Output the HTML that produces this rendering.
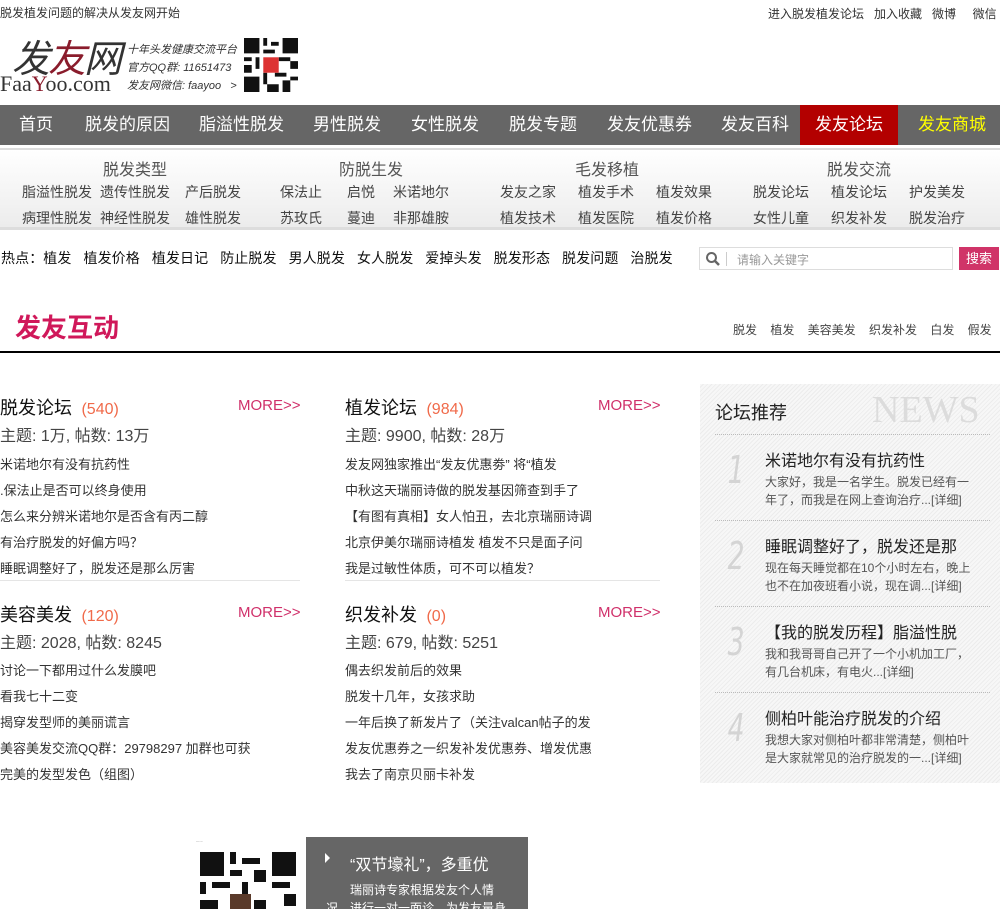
<!DOCTYPE html>
<html><head><meta charset="utf-8"><style>
*{margin:0;padding:0;box-sizing:border-box}
body{width:1000px;height:909px;overflow:hidden;background:#fff;font-family:"Liberation Sans","Noto Sans CJK SC",sans-serif;color:#333;position:relative}
.a{position:absolute;white-space:nowrap}
.nav{position:absolute;top:105px;left:0;width:1000px;height:40px;background:#666}
.nav span{position:absolute;top:0;line-height:40px;font-size:17px;color:#fff}
.sub{position:absolute;top:148px;left:0;width:1000px;height:82px;background:linear-gradient(#fff,#ececec);border-top:2px solid #ddd;border-bottom:3px solid #ddd}
.sub span{position:absolute;font-size:14px;color:#444}
.sub .h{font-size:16px;color:#555}
.f{font-size:13px;color:#333}
.side{position:absolute;left:700px;top:384px;width:300px;height:399px;background:repeating-linear-gradient(135deg,#f7f7f7 0 2px,#ececec 2px 3px)}
.dot{position:absolute;left:15px;width:275px;border-top:1px dotted #bbb}
.num{position:absolute;left:24px;font-size:38px;color:#d4d4d4;font-style:italic;font-family:"DejaVu Sans",sans-serif;font-weight:normal;transform:scaleX(0.7)}
.st{position:absolute;left:65px;font-size:16px;color:#222}
.sd{position:absolute;left:65px;font-size:12px;color:#555;line-height:18px;width:215px;white-space:normal}
.more{position:absolute;font-size:15px;color:#d0306a}
</style></head><body>
<div class="a" style="left:0;top:4px;font-size:12px">脱发植发问题的解决从发友网开始</div>
<div class="a" style="left:768px;top:5px;font-size:12px">进入脱发植发论坛 &nbsp; 加入收藏 &nbsp; 微博 &nbsp;&nbsp;&nbsp; 微信</div>
<div class="a" style="left:12px;top:28px;font-size:38px;font-style:italic;color:#333;letter-spacing:-2px">发<span style="color:#8a1c2c">友</span>网</div>
<div class="a" style="left:0;top:71px;font-size:22px;font-family:'Liberation Serif',serif;color:#333">Faa<span style="color:#8a1c2c">Y</span>oo.com</div>
<div class="a" style="left:127px;top:41px;font-size:11px;font-style:italic;line-height:18px;color:#333">十年头发健康交流平台<br>官方QQ群: 11651473<br>发友网微信: faayoo &nbsp; &gt;</div>
<svg class="a" style="left:243px;top:38px" width="56" height="54" viewBox="0 0 14 14"><rect width="14" height="14" fill="#fff"/><g fill="#111"><path d="M0 0h4v4h-4zM10 0h4v4h-4zM0 10h4v4h-4z"/><path d="M5 0h1v2h-1zM7 1h2v1h-2zM5 3h3v1h-3zM0 5h2v1h-2zM3 5h1v3h-1zM9 5h3v1h-3zM12 6h2v2h-2zM0 7h2v2h-2zM5 9h1v3h-1zM8 9h3v1h-3zM10 11h2v3h-2zM12 10h2v1h-2zM6 12h3v2h-3z"/></g><rect x="5" y="5" width="4" height="4" fill="#d33"/></svg>
<div class="nav">
<span style="left:19px">首页</span><span style="left:85px">脱发的原因</span><span style="left:199px">脂溢性脱发</span><span style="left:313px">男性脱发</span><span style="left:411px">女性脱发</span><span style="left:509px">脱发专题</span><span style="left:607px">发友优惠券</span><span style="left:721px">发友百科</span>
<span style="left:800px;width:98px;background:#b30000;text-align:center">发友论坛</span><span style="left:918px;color:#ff0">发友商城</span>
</div>
<div class="sub">
<span class="h" style="left:103px;top:6px">脱发类型</span><span class="h" style="left:339px;top:6px">防脱生发</span><span class="h" style="left:575px;top:6px">毛发移植</span><span class="h" style="left:827px;top:6px">脱发交流</span>
<span style="left:22px;top:32px">脂溢性脱发</span><span style="left:100px;top:32px">遗传性脱发</span><span style="left:185px;top:32px">产后脱发</span><span style="left:280px;top:32px">保法止</span><span style="left:347px;top:32px">启悦</span><span style="left:393px;top:32px">米诺地尔</span><span style="left:500px;top:32px">发友之家</span><span style="left:578px;top:32px">植发手术</span><span style="left:656px;top:32px">植发效果</span><span style="left:753px;top:32px">脱发论坛</span><span style="left:831px;top:32px">植发论坛</span><span style="left:909px;top:32px">护发美发</span>
<span style="left:22px;top:58px">病理性脱发</span><span style="left:100px;top:58px">神经性脱发</span><span style="left:185px;top:58px">雄性脱发</span><span style="left:280px;top:58px">苏玫氏</span><span style="left:347px;top:58px">蔓迪</span><span style="left:393px;top:58px">非那雄胺</span><span style="left:500px;top:58px">植发技术</span><span style="left:578px;top:58px">植发医院</span><span style="left:656px;top:58px">植发价格</span><span style="left:753px;top:58px">女性儿童</span><span style="left:831px;top:58px">织发补发</span><span style="left:909px;top:58px">脱发治疗</span>
</div>
<div class="a" style="left:1px;top:248px;font-size:14px;color:#111;letter-spacing:0.1px">热点：植发 &nbsp; 植发价格 &nbsp; 植发日记 &nbsp; 防止脱发 &nbsp; 男人脱发 &nbsp; 女人脱发 &nbsp; 爱掉头发 &nbsp; 脱发形态 &nbsp; 脱发问题 &nbsp; 治脱发</div>
<div class="a" style="left:699px;top:247px;width:254px;height:23px;border:1px solid #ddd;background:#fff">
<svg style="position:absolute;left:5px;top:3px" width="16" height="16" viewBox="0 0 16 16"><circle cx="6.5" cy="6.5" r="4.5" fill="none" stroke="#666" stroke-width="2"/><path d="M10 10l4 4" stroke="#666" stroke-width="2.5"/></svg>
<div style="position:absolute;left:26px;top:4px;height:14px;border-left:1px solid #ccc"></div>
<span style="position:absolute;left:37px;top:3px;font-size:12px;color:#999">请输入关键字</span></div>
<div class="a" style="left:959px;top:247px;width:40px;height:23px;background:#d03468;color:#fff;font-size:13px;line-height:23px;text-align:center">搜索</div>
<div class="a" style="left:15px;top:308px;font-size:26px;font-weight:bold;color:#d0185a">发友互动</div>
<div class="a" style="left:733px;top:321px;font-size:12px;color:#444">脱发 &nbsp;&nbsp; 植发 &nbsp;&nbsp; 美容美发 &nbsp;&nbsp; 织发补发 &nbsp;&nbsp; 白发 &nbsp;&nbsp; 假发</div>
<div class="a" style="left:0;top:351px;width:1000px;height:2px;background:#000"></div>

<div class="a" style="left:0;top:394px;font-size:18px;color:#111">脱发论坛 <span style="font-size:16px;color:#f06a4a">&nbsp;(540)</span></div>
<div class="more" style="left:238px;top:397px">MORE&gt;&gt;</div>
<div class="a" style="left:0;top:422px;font-size:16px;color:#444">主题: 1万, 帖数: 13万</div>
<div class="a f" style="left:0;top:452px;line-height:26px">米诺地尔有没有抗药性<br>.保法止是否可以终身使用<br>怎么来分辨米诺地尔是否含有丙二醇<br>有治疗脱发的好偏方吗？<br>睡眠调整好了，脱发还是那么厉害</div>
<div class="a" style="left:0;top:580px;width:300px;border-top:1px solid #e5e5e5"></div>
<div class="a" style="left:0;top:601px;font-size:18px;color:#111">美容美发 <span style="font-size:16px;color:#f06a4a">&nbsp;(120)</span></div>
<div class="more" style="left:238px;top:604px">MORE&gt;&gt;</div>
<div class="a" style="left:0;top:629px;font-size:16px;color:#444">主题: 2028, 帖数: 8245</div>
<div class="a f" style="left:0;top:658px;line-height:26px">讨论一下都用过什么发膜吧<br>看我七十二变<br>揭穿发型师的美丽谎言<br>美容美发交流QQ群：29798297 加群也可获<br>完美的发型发色（组图）</div>
<div class="a" style="left:345px;top:394px;font-size:18px;color:#111">植发论坛 <span style="font-size:16px;color:#f06a4a">&nbsp;(984)</span></div>
<div class="more" style="left:598px;top:397px">MORE&gt;&gt;</div>
<div class="a" style="left:345px;top:422px;font-size:16px;color:#444">主题: 9900, 帖数: 28万</div>
<div class="a f" style="left:345px;top:452px;line-height:26px">发友网独家推出“发友优惠劵” 将“植发<br>中秋这天瑞丽诗做的脱发基因筛查到手了<br>【有图有真相】女人怕丑，去北京瑞丽诗调<br>北京伊美尔瑞丽诗植发 植发不只是面子问<br>我是过敏性体质，可不可以植发？</div>
<div class="a" style="left:345px;top:580px;width:315px;border-top:1px solid #e5e5e5"></div>
<div class="a" style="left:345px;top:601px;font-size:18px;color:#111">织发补发 <span style="font-size:16px;color:#f06a4a">&nbsp;(0)</span></div>
<div class="more" style="left:598px;top:604px">MORE&gt;&gt;</div>
<div class="a" style="left:345px;top:629px;font-size:16px;color:#444">主题: 679, 帖数: 5251</div>
<div class="a f" style="left:345px;top:658px;line-height:26px">偶去织发前后的效果<br>脱发十几年，女孩求助<br>一年后换了新发片了（关注valcan帖子的发<br>发友优惠券之一织发补发优惠券、增发优惠<br>我去了南京贝丽卡补发</div>

<div class="side">
<div class="a" style="left:172px;top:4px;font-size:38px;font-family:'Liberation Serif',serif;color:#dcdcdc">NEWS</div>
<div class="a" style="left:15px;top:15px;font-size:18px;color:#222">论坛推荐</div>
<div class="dot" style="top:50px"></div>
<div class="num" style="top:64px">1</div><div class="st" style="top:63px">米诺地尔有没有抗药性</div><div class="sd" style="top:89px">大家好，我是一名学生。脱发已经有一年了，而我是在网上查询治疗...[详细]</div>
<div class="dot" style="top:136px"></div>
<div class="num" style="top:150px">2</div><div class="st" style="top:149px">睡眠调整好了，脱发还是那</div><div class="sd" style="top:175px">现在每天睡觉都在10个小时左右，晚上也不在加夜班看小说，现在调...[详细]</div>
<div class="dot" style="top:222px"></div>
<div class="num" style="top:236px">3</div><div class="st" style="top:235px">【我的脱发历程】脂溢性脱</div><div class="sd" style="top:261px">我和我哥哥自己开了一个小机加工厂，有几台机床，有电火...[详细]</div>
<div class="dot" style="top:308px"></div>
<div class="num" style="top:322px">4</div><div class="st" style="top:321px">侧柏叶能治疗脱发的介绍</div><div class="sd" style="top:347px">我想大家对侧柏叶都非常清楚，侧柏叶是大家就常见的治疗脱发的一...[详细]</div>
</div>

<svg class="a" style="left:200px;top:852px" width="96" height="57" viewBox="0 0 16 9.5"><rect width="16" height="9.5" fill="#fff"/><g fill="#111"><path d="M0 0h4v4h-4zM12 0h4v4h-4z"/><path d="M5 0h1v2h-1zM7 1h3v1h-3zM5 3h2v1h-2zM9 3h2v2h-2zM0 5h1v2h-1zM2 5h3v1h-3zM7 5h1v2h-1zM12 5h3v1h-3zM14 7h2v2h-2zM0 8h3v1.5h-3zM9 8h2v1.5h-2z"/></g><rect x="5" y="7" width="3.5" height="2.5" fill="#5a3a2a"/></svg>
<div class="a" style="left:196px;top:838px;width:150px;font-size:4px;color:#333">......</div>
<div class="a" style="left:306px;top:837px;width:222px;height:72px;background:#666"></div>
<div class="a" style="left:325px;top:853px;width:0;height:0;border-left:5px solid #fff;border-top:5px solid transparent;border-bottom:5px solid transparent"></div>
<div class="a" style="left:350px;top:851px;font-size:16px;color:#fff">“双节壕礼”，多重优</div>
<div class="a" style="left:350px;top:881px;font-size:12px;color:#fff">瑞丽诗专家根据发友个人情</div>
<div class="a" style="left:326px;top:899px;font-size:12px;color:#fff">况，进行一对一面诊，为发友量身</div>
</body></html>
